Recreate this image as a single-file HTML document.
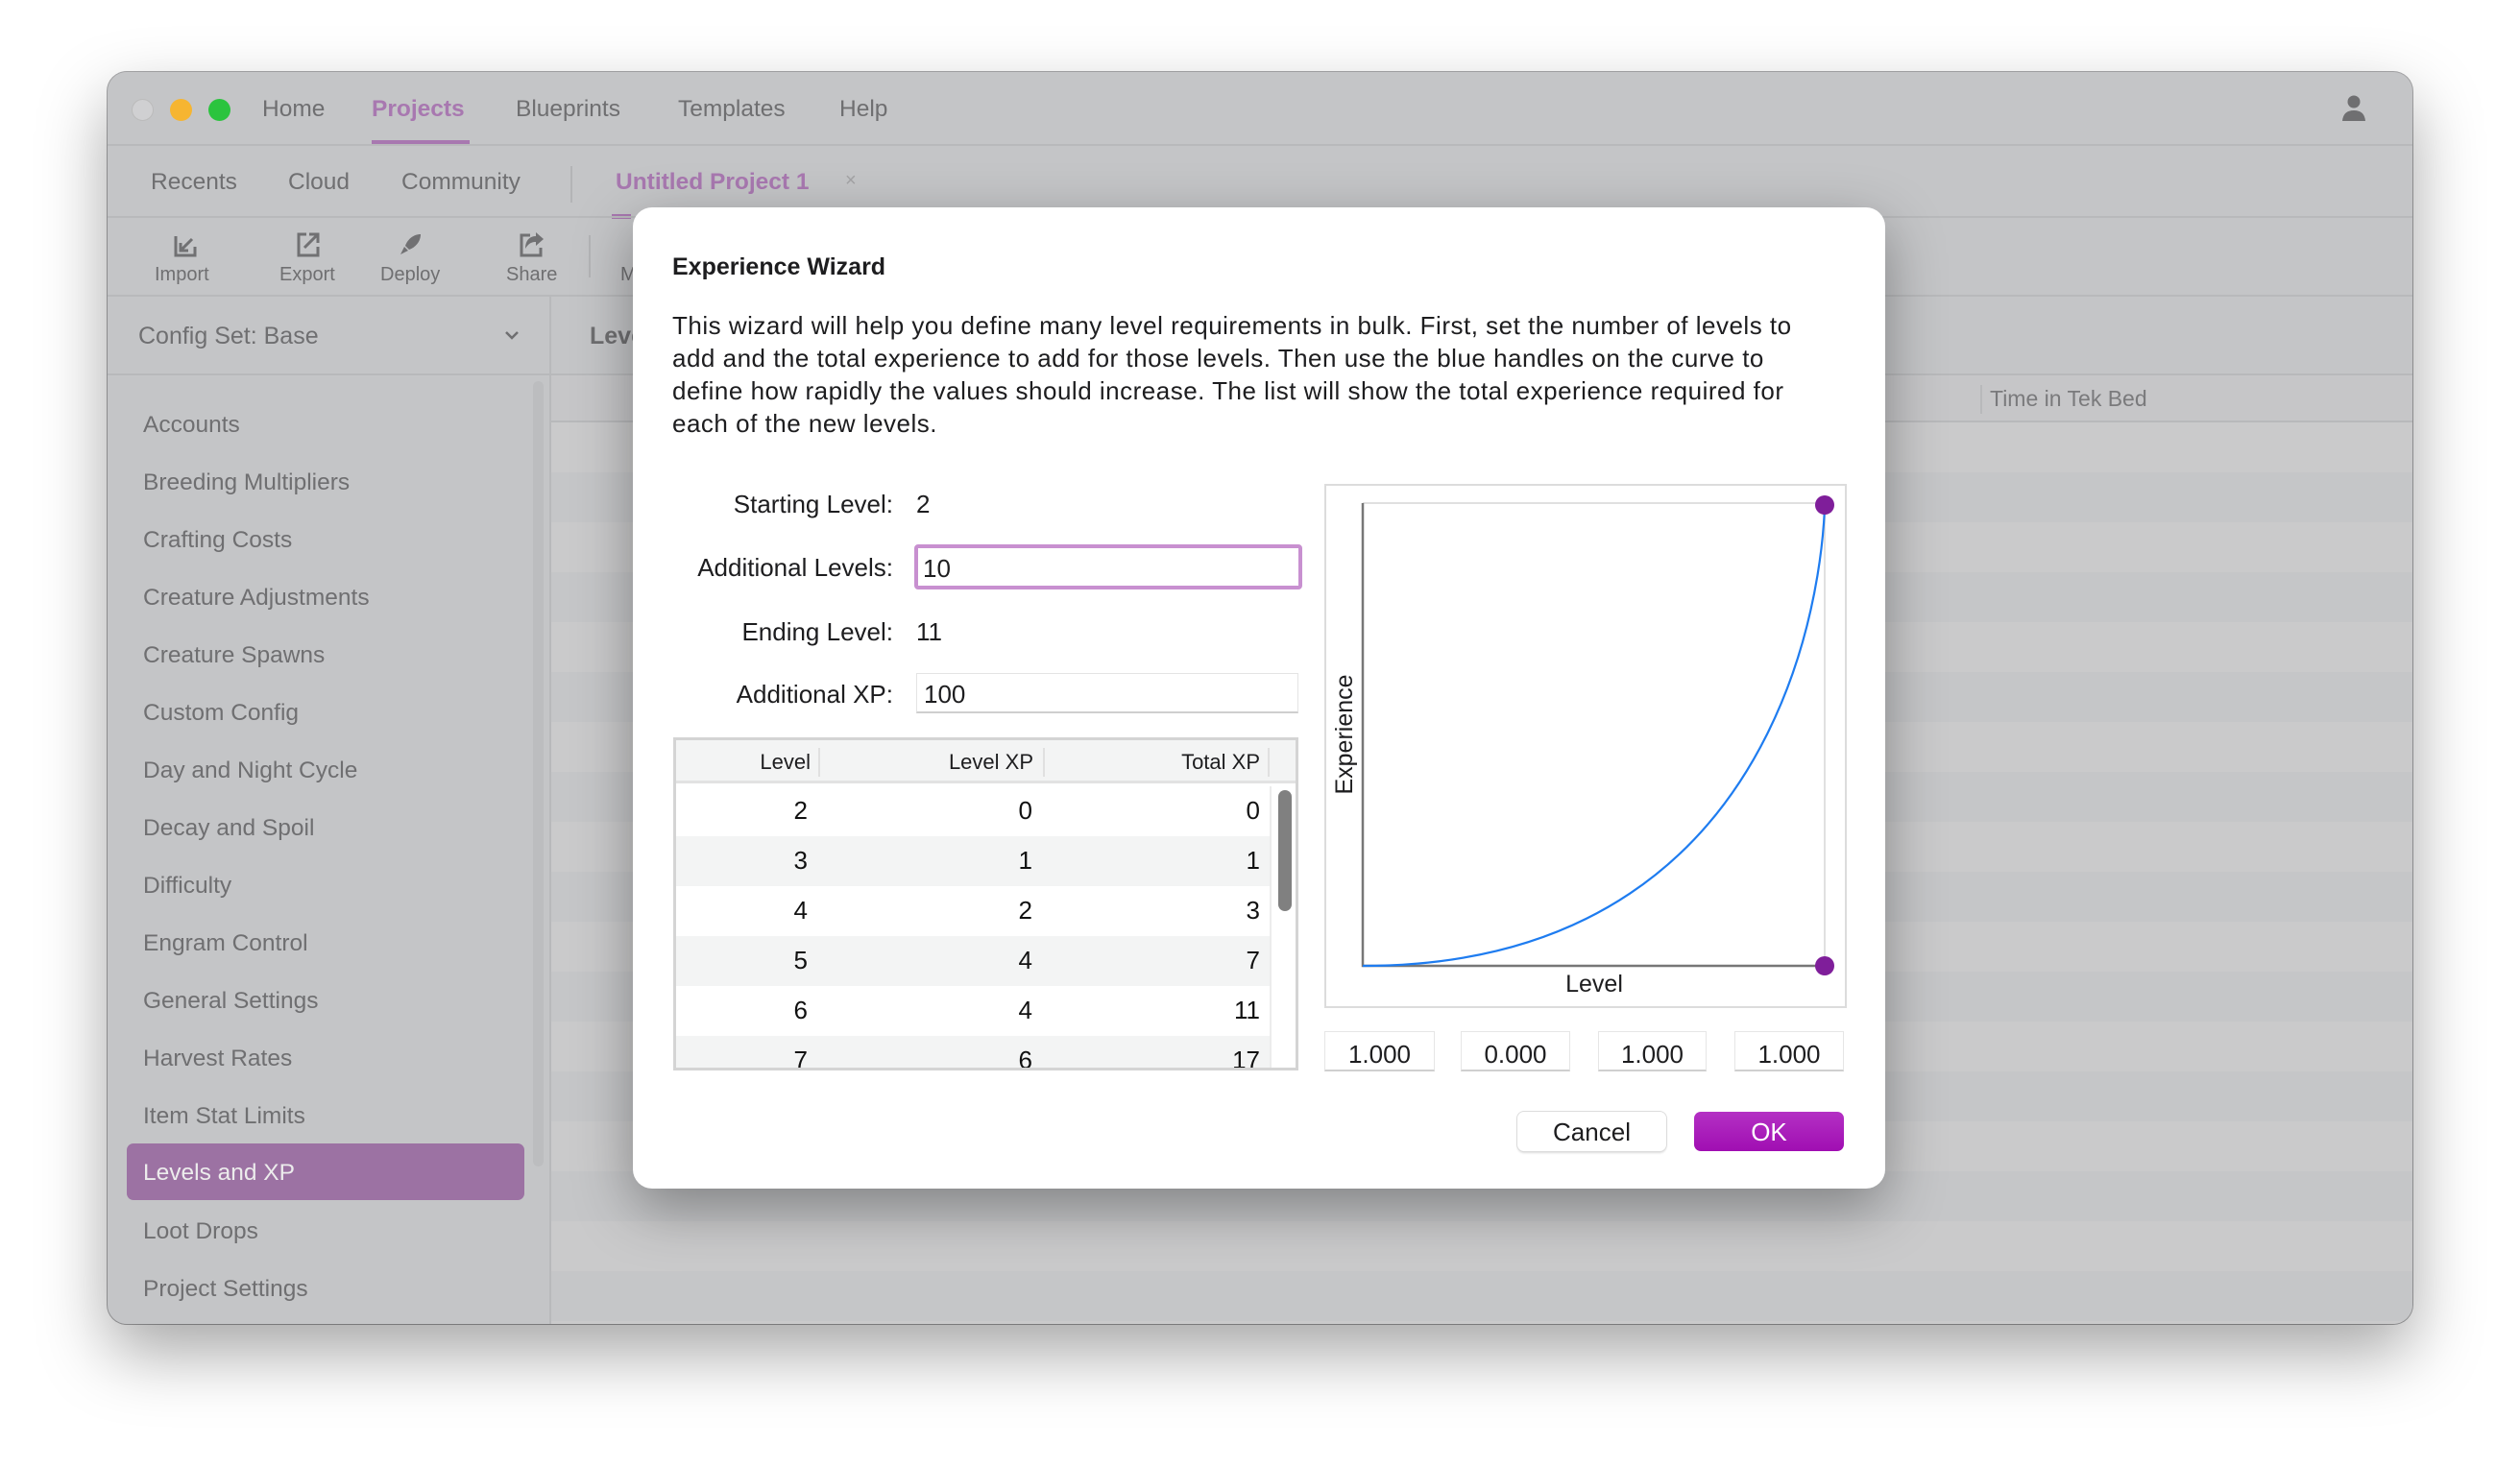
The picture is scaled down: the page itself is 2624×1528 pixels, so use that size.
<!DOCTYPE html>
<html><head><meta charset="utf-8"><style>
*{box-sizing:border-box;margin:0;padding:0}
body{width:2624px;height:1528px;background:#fff;font-family:"Liberation Sans",sans-serif;position:relative;overflow:hidden}
.abs{position:absolute}
.win{left:112px;top:75px;width:2400px;height:1304px;background:#c4c5c7;border-radius:20px;overflow:hidden;box-shadow:0 30px 70px rgba(0,0,0,.35),0 0 0 1px #a9a9ab}
.t{position:absolute;white-space:nowrap;color:#6f6f71;font-size:24.5px;line-height:1}
.hl{position:absolute;left:0;width:2400px;height:2px;background:#b8b9bb}
.dlg{left:659px;top:216px;width:1304px;height:1022px;background:#fff;border-radius:20px;box-shadow:0 20px 60px rgba(0,0,0,.35)}
.d{position:absolute;white-space:nowrap;color:#1d1d1f;font-size:25px;line-height:1}
.lbl{text-align:right;width:300px;font-size:26px}
.num{position:absolute;text-align:right;font-size:26px;color:#111;width:80px}
</style></head><body>
<div class="abs win">
  <div class="abs" style="left:25px;top:28px;width:23px;height:23px;border-radius:50%;background:#d0d0d2;border:1px solid #bbb"></div>
  <div class="abs" style="left:65px;top:28px;width:23px;height:23px;border-radius:50%;background:#f6b531"></div>
  <div class="abs" style="left:105px;top:28px;width:23px;height:23px;border-radius:50%;background:#2bc43e"></div>
  <div class="t" style="left:161px;top:27px">Home</div>
  <div class="t" style="left:275px;top:27px;color:#a878b0;font-weight:bold">Projects</div>
  <div class="abs" style="left:275px;top:71px;width:102px;height:5px;background:#a878b0"></div>
  <div class="t" style="left:425px;top:27px">Blueprints</div>
  <div class="t" style="left:594px;top:27px">Templates</div>
  <div class="t" style="left:762px;top:27px">Help</div>
  <svg class="abs" style="left:2326px;top:24px" width="26" height="28" viewBox="0 0 26 28"><circle cx="13" cy="7" r="6.5" fill="#6f6f71"/><path d="M1 27 Q2 16 13 16 Q24 16 25 27Z" fill="#6f6f71"/></svg>
  <div class="hl" style="top:75px"></div>
  <div class="t" style="left:45px;top:103px">Recents</div>
  <div class="t" style="left:188px;top:103px">Cloud</div>
  <div class="t" style="left:306px;top:103px">Community</div>
  <div class="abs" style="left:482px;top:98px;width:2px;height:38px;background:#b3b4b6"></div>
  <div class="t" style="left:529px;top:103px;color:#a878b0;font-weight:bold">Untitled Project 1</div>
  <div class="t" style="left:768px;top:103px;color:#a3a3a5;font-size:20px">×</div>
  <div class="abs" style="left:525px;top:148px;width:20px;height:5px;background:#a878b0"></div>
  <div class="hl" style="top:150px"></div>
  <svg class="abs" style="left:68px;top:168px" width="26" height="26" viewBox="0 0 26 26" fill="none" stroke="#717173" stroke-width="3"><path d="M3 3V23H23V14M20 6L8 18M8 10V18H16"/></svg>
  <div class="t" style="left:49px;top:201px;font-size:20px">Import</div>
  <svg class="abs" style="left:196px;top:166px" width="26" height="28" viewBox="0 0 26 28" fill="none" stroke="#717173" stroke-width="3"><path d="M11 3H3V25H23V16M9 17L22 4M14 3H23V12"/></svg>
  <div class="t" style="left:179px;top:201px;font-size:20px">Export</div>
  <svg class="abs" style="left:302px;top:167px" width="26" height="26" viewBox="0 0 26 26"><path d="M24 2C16 2 10 8 8 14L12 18C18 16 24 10 24 2Z" fill="#717173"/><path d="M7 15L3 23L11 19Z" fill="#717173"/></svg>
  <div class="t" style="left:284px;top:201px;font-size:20px">Deploy</div>
  <svg class="abs" style="left:428px;top:166px" width="28" height="28" viewBox="0 0 28 28"><path d="M12 4H3V25H23V17" fill="none" stroke="#717173" stroke-width="3"/><path d="M26 8L18 1V5C11 5 7 10 7 18C10 13 13 11 18 11V15Z" fill="#717173"/></svg>
  <div class="t" style="left:415px;top:201px;font-size:20px">Share</div>
  <div class="abs" style="left:501px;top:170px;width:2px;height:44px;background:#b3b4b6"></div>
  <div class="t" style="left:534px;top:201px;font-size:20px">M</div>
  <div class="hl" style="top:232px"></div>
  <div class="abs" style="left:460px;top:233px;width:2px;height:1071px;background:#b8b9bb"></div>
  <div class="t" style="left:32px;top:263px;font-size:25px">Config Set: Base</div>
  <svg class="abs" style="left:413px;top:268px" width="16" height="12" viewBox="0 0 16 12" fill="none" stroke="#6f6f71" stroke-width="2.5"><path d="M2 3L8 9L14 3"/></svg>
  <div class="t" style="left:502px;top:263px;font-size:25px;font-weight:bold">Leve</div>
  <div class="hl" style="top:314px;width:460px"></div>
  <div class="hl" style="top:314px;left:462px"></div>
  <div class="abs" style="left:462px;top:316px;width:1938px;height:48px;background:#c6c6c8"></div>
  <div class="hl" style="top:363px;left:462px"></div>
  <div class="abs" style="left:1950px;top:326px;width:2px;height:30px;background:#b8b9bb"></div>
  <div class="t" style="left:1960px;top:329px;font-size:23px;color:#7a7a7c">Time in Tek Bed</div>
  <div class="abs" style="left:462px;top:365px;width:1938px;height:939px;background:repeating-linear-gradient(#cacacb 0 52px,#c5c6c8 52px 104px)"></div>
  <div class="abs" style="left:443px;top:322px;width:11px;height:818px;border-radius:6px;background:#bcbdbf"></div>
  <div class="t" style="left:37px;top:356px">Accounts</div>
  <div class="t" style="left:37px;top:416px">Breeding Multipliers</div>
  <div class="t" style="left:37px;top:476px">Crafting Costs</div>
  <div class="t" style="left:37px;top:536px">Creature Adjustments</div>
  <div class="t" style="left:37px;top:596px">Creature Spawns</div>
  <div class="t" style="left:37px;top:656px">Custom Config</div>
  <div class="t" style="left:37px;top:716px">Day and Night Cycle</div>
  <div class="t" style="left:37px;top:776px">Decay and Spoil</div>
  <div class="t" style="left:37px;top:836px">Difficulty</div>
  <div class="t" style="left:37px;top:896px">Engram Control</div>
  <div class="t" style="left:37px;top:956px">General Settings</div>
  <div class="t" style="left:37px;top:1016px">Harvest Rates</div>
  <div class="t" style="left:37px;top:1076px">Item Stat Limits</div>
  <div class="abs" style="left:20px;top:1116px;width:414px;height:59px;border-radius:7px;background:#9c72a3"></div>
  <div class="t" style="left:37px;top:1135px;color:#ececec">Levels and XP</div>
  <div class="t" style="left:37px;top:1196px">Loot Drops</div>
  <div class="t" style="left:37px;top:1256px">Project Settings</div>
</div>

<div class="abs dlg">
  <div class="d" style="left:41px;top:50px;font-weight:bold">Experience Wizard</div>
  <div class="d" style="left:41px;top:106px;line-height:34px;font-size:26px;letter-spacing:0.5px">This wizard will help you define many level requirements in bulk. First, set the number of levels to<br>add and the total experience to add for those levels. Then use the blue handles on the curve to<br>define how rapidly the values should increase. The list will show the total experience required for<br>each of the new levels.</div>
  <div class="d lbl" style="left:-29px;top:296px">Starting Level:</div>
  <div class="d" style="left:295px;top:296px;font-size:26px">2</div>
  <div class="d lbl" style="left:-29px;top:362px">Additional Levels:</div>
  <div class="abs" style="left:293px;top:351px;width:404px;height:47px;border:4px solid #c890d0;border-radius:4px;background:#fff"></div>
  <div class="d" style="left:302px;top:363px;font-size:26px">10</div>
  <div class="d lbl" style="left:-29px;top:429px">Ending Level:</div>
  <div class="d" style="left:295px;top:429px;font-size:26px">11</div>
  <div class="d lbl" style="left:-29px;top:494px">Additional XP:</div>
  <div class="abs" style="left:295px;top:485px;width:398px;height:42px;border:1px solid #e4e4e4;border-bottom:2px solid #cfcfcf"></div>
  <div class="d" style="left:303px;top:494px;font-size:26px">100</div>

  <div class="abs" style="left:42px;top:552px;width:651px;height:347px;border:3px solid #d4d4d4;overflow:hidden;background:#fff">
    <div class="abs" style="left:0;top:0;width:645px;height:45px;background:#f3f4f4;border-bottom:3px solid #e2e2e2"></div>
    <div class="abs" style="left:148px;top:8px;width:2px;height:30px;background:#e0e0e0"></div>
    <div class="abs" style="left:382px;top:8px;width:2px;height:30px;background:#e0e0e0"></div>
    <div class="abs" style="left:616px;top:8px;width:2px;height:30px;background:#e0e0e0"></div>
    <div class="d" style="left:40px;top:12px;width:100px;text-align:right;font-size:22px">Level</div>
    <div class="d" style="left:200px;top:12px;width:172px;text-align:right;font-size:22px">Level XP</div>
    <div class="d" style="left:450px;top:12px;width:158px;text-align:right;font-size:22px">Total XP</div>
    <div class="abs" style="left:0;top:48px;width:618px;height:300px;background:repeating-linear-gradient(#fff 0 52px,#f3f4f4 52px 104px)"></div>
    <div class="abs" style="left:618px;top:48px;width:2px;height:300px;background:#ececec"></div>
    <div class="abs" style="left:627px;top:52px;width:14px;height:126px;border-radius:7px;background:#808080"></div>
    <div class="num" style="left:57px;top:58px">2</div><div class="num" style="left:291px;top:58px">0</div><div class="num" style="left:528px;top:58px">0</div>
    <div class="num" style="left:57px;top:110px">3</div><div class="num" style="left:291px;top:110px">1</div><div class="num" style="left:528px;top:110px">1</div>
    <div class="num" style="left:57px;top:162px">4</div><div class="num" style="left:291px;top:162px">2</div><div class="num" style="left:528px;top:162px">3</div>
    <div class="num" style="left:57px;top:214px">5</div><div class="num" style="left:291px;top:214px">4</div><div class="num" style="left:528px;top:214px">7</div>
    <div class="num" style="left:57px;top:266px">6</div><div class="num" style="left:291px;top:266px">4</div><div class="num" style="left:528px;top:266px">11</div>
    <div class="num" style="left:57px;top:318px">7</div><div class="num" style="left:291px;top:318px">6</div><div class="num" style="left:528px;top:318px">17</div>
  </div>

  <svg class="abs" style="left:720px;top:288px" width="544" height="546" viewBox="0 0 544 546">
    <rect x="1" y="1" width="542" height="544" fill="#fff" stroke="#dcdcdc" stroke-width="2"/>
    <path d="M40 20H521V502" fill="none" stroke="#e0e0e0" stroke-width="2"/>
    <path d="M40 20V502H521" fill="none" stroke="#777" stroke-width="2.5"/>
    <path d="M40 502C521 502 521 20 521 20" fill="none" stroke="#1e7cf0" stroke-width="2.2"/>
    <circle cx="521" cy="22" r="10" fill="#7f1e9a"/>
    <circle cx="521" cy="502" r="10" fill="#7f1e9a"/>
    <text x="281" y="529" font-family="Liberation Sans" font-size="25" fill="#1d1d1f" text-anchor="middle">Level</text>
    <text transform="translate(29,261) rotate(-90)" font-family="Liberation Sans" font-size="25" fill="#1d1d1f" text-anchor="middle">Experience</text>
  </svg>

  <div class="abs" style="left:720px;top:858px;width:115px;height:42px;border:1px solid #e6e6e6;border-bottom:2px solid #cfcfcf"></div><div class="d" style="left:720px;top:869px;width:115px;text-align:center;font-size:26px">1.000</div>
  <div class="abs" style="left:862px;top:858px;width:114px;height:42px;border:1px solid #e6e6e6;border-bottom:2px solid #cfcfcf"></div><div class="d" style="left:862px;top:869px;width:114px;text-align:center;font-size:26px">0.000</div>
  <div class="abs" style="left:1005px;top:858px;width:113px;height:42px;border:1px solid #e6e6e6;border-bottom:2px solid #cfcfcf"></div><div class="d" style="left:1005px;top:869px;width:113px;text-align:center;font-size:26px">1.000</div>
  <div class="abs" style="left:1147px;top:858px;width:114px;height:42px;border:1px solid #e6e6e6;border-bottom:2px solid #cfcfcf"></div><div class="d" style="left:1147px;top:869px;width:114px;text-align:center;font-size:26px">1.000</div>

  <div class="abs" style="left:921px;top:942px;width:155px;height:41px;border-radius:7px;background:#fff;box-shadow:0 0 0 1px #dcdcdc,0 2px 2px rgba(0,0,0,.15)"></div>
  <div class="d" style="left:921px;top:950px;width:155px;text-align:center;font-size:26px">Cancel</div>
  <div class="abs" style="left:1105px;top:942px;width:156px;height:41px;border-radius:7px;background:linear-gradient(#b430c4,#a00eb2)"></div>
  <div class="d" style="left:1105px;top:950px;width:156px;text-align:center;color:#fff;font-size:26px">OK</div>
</div>
</body></html>
